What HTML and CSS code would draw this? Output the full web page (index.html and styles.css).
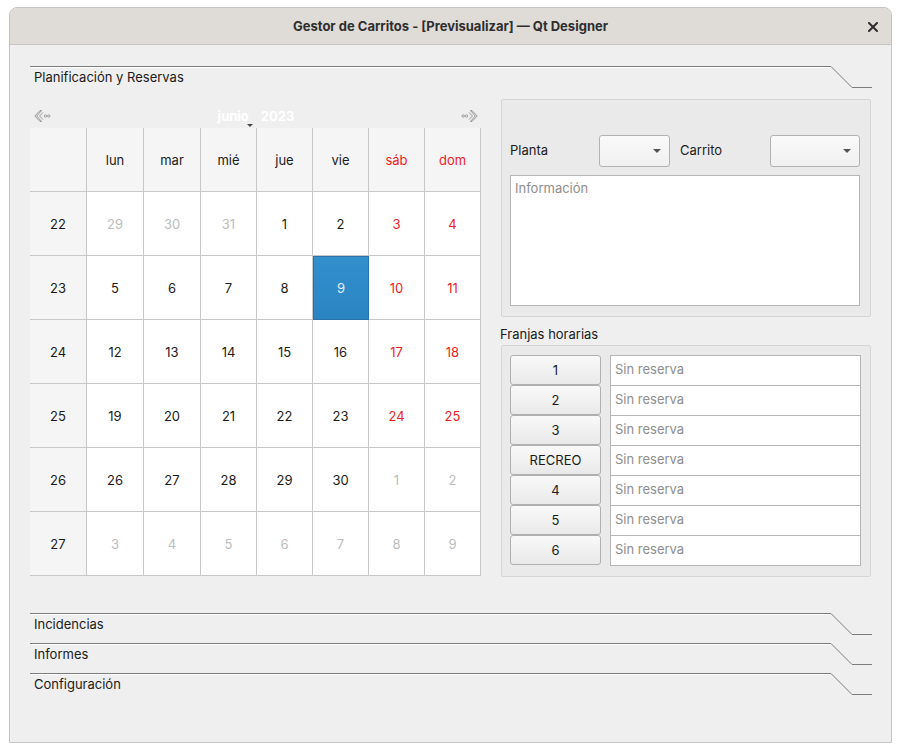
FILE: index.html
```html
<!DOCTYPE html>
<html lang="es">
<head>
<meta charset="utf-8">
<title>Gestor de Carritos</title>
<link rel="stylesheet" href="styles.css">
</head>
<body>
<div class="window">
  <div class="titlebar">
    <span class="title">Gestor de Carritos - [Previsualizar] — Qt Designer</span>
    <svg class="close" width="10" height="10" viewBox="0 0 10 10"><path d="M1 1 L9 9 M9 1 L1 9" stroke="#2e2e2e" stroke-width="2" stroke-linecap="square"/></svg>
  </div>
  <div class="content">
    <div class="tab">
      <div class="tab-line"><span class="tab-label">Planificación y Reservas</span></div>
      <svg class="tab-end" width="41" height="22" viewBox="0 0 41 22"><path d="M0 0.5 L21 21.5 L41 21.5" fill="none" stroke="#7c7c7c" stroke-width="1"/></svg>
    </div>
    <div class="page">
      <div class="calendar">
        <div class="cal-nav">
          <svg class="nav-arrow" width="17" height="12" viewBox="0 0 17 12"><path d="M6 0.5 L0.8 6 L6 11.5 L7.5 11.5 L2.8 6 L7.5 0.5 Z" fill="none" stroke="#8c8c8c" stroke-width="0.9" stroke-linejoin="round"/><path d="M9 2.5 L5.5 6 L9 9.5" fill="none" stroke="#8c8c8c" stroke-width="0.9"/><circle cx="11.5" cy="6" r="1.2" fill="none" stroke="#8c8c8c" stroke-width="0.8"/><circle cx="14.8" cy="6" r="1.2" fill="none" stroke="#8c8c8c" stroke-width="0.8"/></svg>
          <div class="month">
            <span class="month-name">junio<span class="drop"></span></span>
            <span class="year">2023</span>
          </div>
          <svg class="nav-arrow" width="17" height="12" viewBox="0 0 17 12"><circle cx="2.2" cy="6" r="1.2" fill="none" stroke="#8c8c8c" stroke-width="0.8"/><circle cx="5.5" cy="6" r="1.2" fill="none" stroke="#8c8c8c" stroke-width="0.8"/><path d="M8 2.5 L11.5 6 L8 9.5" fill="none" stroke="#8c8c8c" stroke-width="0.9"/><path d="M11 0.5 L16.2 6 L11 11.5 L9.5 11.5 L14.2 6 L9.5 0.5 Z" fill="none" stroke="#8c8c8c" stroke-width="0.9" stroke-linejoin="round"/></svg>
        </div>
        <div class="cal-grid">
          <div class="hd"></div>
          <div class="hd">lun</div><div class="hd">mar</div><div class="hd">mié</div><div class="hd">jue</div><div class="hd">vie</div><div class="hd we">sáb</div><div class="hd we">dom</div>

          <div class="wk">22</div>
          <div class="d off">29</div><div class="d off">30</div><div class="d off">31</div><div class="d">1</div><div class="d">2</div><div class="d we">3</div><div class="d we">4</div>

          <div class="wk">23</div>
          <div class="d">5</div><div class="d">6</div><div class="d">7</div><div class="d">8</div><div class="d sel">9</div><div class="d we">10</div><div class="d we">11</div>

          <div class="wk">24</div>
          <div class="d">12</div><div class="d">13</div><div class="d">14</div><div class="d">15</div><div class="d">16</div><div class="d we">17</div><div class="d we">18</div>

          <div class="wk">25</div>
          <div class="d">19</div><div class="d">20</div><div class="d">21</div><div class="d">22</div><div class="d">23</div><div class="d we">24</div><div class="d we">25</div>

          <div class="wk">26</div>
          <div class="d">26</div><div class="d">27</div><div class="d">28</div><div class="d">29</div><div class="d">30</div><div class="d off">1</div><div class="d off">2</div>

          <div class="wk">27</div>
          <div class="d off">3</div><div class="d off">4</div><div class="d off">5</div><div class="d off">6</div><div class="d off">7</div><div class="d off">8</div><div class="d off">9</div>
        </div>
      </div>
      <div class="side">
        <div class="group info-group">
          <div class="combo-row">
            <span class="lbl lbl-planta">Planta</span>
            <div class="combo combo-planta"><span class="caret"></span></div>
            <span class="lbl lbl-carrito">Carrito</span>
            <div class="combo combo-carrito"><span class="caret"></span></div>
          </div>
          <div class="textarea">Información</div>
        </div>
        <div class="group-title">Franjas horarias</div>
        <div class="group slots">
          <button class="btn">1</button><div class="edit">Sin reserva</div>
          <button class="btn">2</button><div class="edit">Sin reserva</div>
          <button class="btn">3</button><div class="edit">Sin reserva</div>
          <button class="btn">RECREO</button><div class="edit">Sin reserva</div>
          <button class="btn">4</button><div class="edit">Sin reserva</div>
          <button class="btn">5</button><div class="edit">Sin reserva</div>
          <button class="btn">6</button><div class="edit">Sin reserva</div>
        </div>
      </div>
    </div>
    <div class="tab">
      <div class="tab-line"><span class="tab-label">Incidencias</span></div>
      <svg class="tab-end" width="41" height="22" viewBox="0 0 41 22"><path d="M0 0.5 L21 21.5 L41 21.5" fill="none" stroke="#7c7c7c" stroke-width="1"/></svg>
    </div>
    <div class="tab">
      <div class="tab-line"><span class="tab-label">Informes</span></div>
      <svg class="tab-end" width="41" height="22" viewBox="0 0 41 22"><path d="M0 0.5 L21 21.5 L41 21.5" fill="none" stroke="#7c7c7c" stroke-width="1"/></svg>
    </div>
    <div class="tab">
      <div class="tab-line"><span class="tab-label">Configuración</span></div>
      <svg class="tab-end" width="41" height="22" viewBox="0 0 41 22"><path d="M0 0.5 L21 21.5 L41 21.5" fill="none" stroke="#7c7c7c" stroke-width="1"/></svg>
    </div>
  </div>
</div>
</body>
</html>
```

FILE: styles.css
```css
* { box-sizing: border-box; }
html, body {
  margin: 0;
  padding: 0;
  background: #ffffff;
  font-family: Inter, "Noto Sans", "DejaVu Sans", sans-serif;
  font-size: 13px;
  color: #1b1b1b;
}
.window {
  margin: 7px 0 0 9px;
  width: 883px;
  height: 736px;
  border: 1px solid #c4c4c4;
  border-radius: 8px 8px 0 0;
  background: #efefef;
  overflow: hidden;
}
.titlebar {
  position: relative;
  height: 37px;
  background: #dfdcd8;
  border-bottom: 1px solid #c8c5c1;
  display: flex;
  align-items: center;
  justify-content: center;
}
.title {
  font-weight: bold;
  font-size: 13px;
  color: #2e2e2e;
}
.close {
  position: absolute;
  right: 13px;
  top: 14px;
}
.content {
  padding: 21px 19px 0 20px;
}
.tab {
  display: flex;
  height: 22px;
  margin-bottom: 8px;
}
.tab-line {
  flex: 1;
  border-top: 1px solid #7c7c7c;
  box-shadow: inset 0 1px 0 #ffffff;
  padding-left: 4px;
  line-height: 21px;
}
.tab-end { display: block; }
.page {
  height: 525px;
  margin-top: -8px;
  padding-top: 11px;
  display: flex;
  gap: 20px;
}
.calendar { width: 451px; }
.cal-nav {
  height: 29px;
  padding: 5px 3px 0 4px;
  display: flex;
  align-items: center;
  justify-content: space-between;
}
.month {
  display: flex;
  gap: 12px;
  color: #ffffff;
  font-weight: bold;
}
.month-name { position: relative; }
.drop {
  position: absolute;
  right: -4px;
  bottom: -3px;
  border-left: 3px solid transparent;
  border-right: 3px solid transparent;
  border-top: 3px solid #444;
}
.cal-grid {
  display: grid;
  grid-template-columns: 57px 57px 57px 56px 56px 56px 56px 56px;
  grid-auto-rows: 64px;
}
.cal-grid > div {
  border-right: 1px solid #c8c8c8;
  border-bottom: 1px solid #c8c8c8;
  display: flex;
  align-items: center;
  justify-content: center;
  background: #ffffff;
}
.cal-grid > .hd, .cal-grid > .wk { background: #f5f5f5; }
.we { color: #ee1c24; }
.off { color: #bcbcbc; }
.cal-grid > .sel {
  background: linear-gradient(#3290cd, #2b84c2);
  border: 1px solid #2a72a8;
  color: #e6eef6;
}
.side {
  width: 370px;
}
.group {
  border: 1px solid #d6d6d6;
  border-radius: 2px;
  background: #eaeaea;
}
.info-group {
  height: 218px;
  padding: 35px 10px 0 8px;
}
.combo-row {
  display: flex;
  align-items: center;
  height: 32px;
}
.lbl { width: 90px; margin-top: -2px; }
.lbl-carrito { margin-left: 10px; }
.combo {
  position: relative;
  height: 32px;
  border: 1px solid #b2b2b2;
  border-radius: 3px;
  background: linear-gradient(#fafafa, #f0f0f0);
}
.combo-planta { width: 71px; }
.combo-carrito { width: 91px; }
.caret {
  position: absolute;
  right: 8px;
  top: 13px;
  border-left: 4px solid transparent;
  border-right: 4px solid transparent;
  border-top: 4px solid #555;
}
.textarea {
  margin-top: 8px;
  height: 131px;
  border: 1px solid #b6b6b6;
  background: #ffffff;
  color: #8e8e8e;
  padding: 3px 4px;
  line-height: 19px;
}
.group-title {
  height: 28px;
  padding-top: 9px;
  line-height: 16px;
  margin-left: -1px;
}
.slots {
  height: 232px;
  padding: 9px 0 0 8px;
  display: grid;
  grid-template-columns: 91px 251px;
  grid-auto-rows: 30px;
  column-gap: 9px;
}
.btn {
  font: inherit;
  color: #1b1b1b;
  height: 30px;
  border: 1px solid #b0b0b0;
  border-radius: 3px;
  background: linear-gradient(#f9f9f9, #e9e9e9);
  padding: 0;
}
.edit {
  height: 31px;
  border: 1px solid #b6b6b6;
  background: #ffffff;
  color: #8e8e8e;
  padding: 0 4px;
  line-height: 26px;
}
```
